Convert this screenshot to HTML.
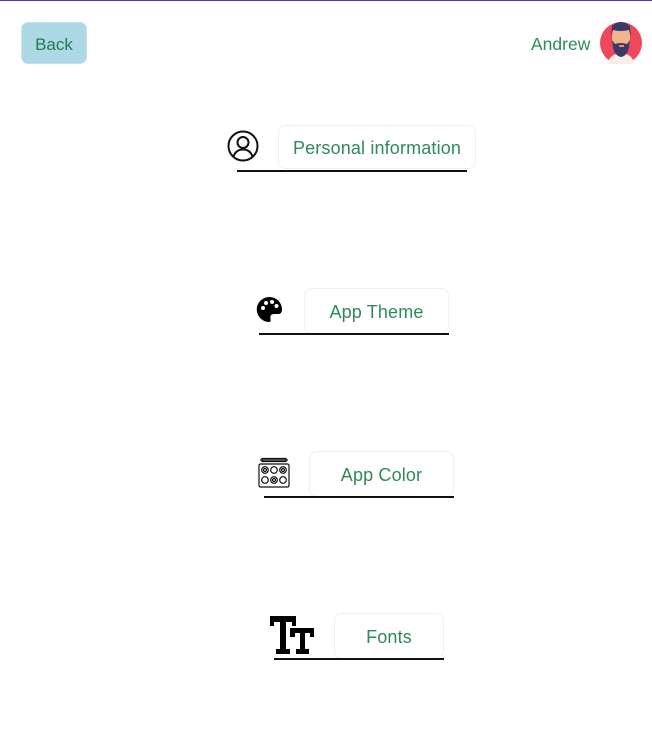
<!DOCTYPE html><html><head><style>
body{margin:0;width:652px;height:736px;background:#fff;position:relative;overflow:hidden;font-family:"Liberation Sans","DejaVu Sans",sans-serif;}
.a{position:absolute}
.btn{position:absolute;border:1px solid #f0f0f0;border-radius:8px;background:#fff;color:#2e8b57;font-size:18px;letter-spacing:0.15px;display:flex;align-items:center;justify-content:center;box-sizing:border-box;padding-top:3px}
.ln{position:absolute;height:2px;background:#111}
</style></head><body>
<div class="a" style="left:0;top:0;width:652px;height:1px;background:#5b2be0"></div>
<div class="btn" style="left:21px;top:22px;width:66px;height:42px;background:#add8e6;border-color:#cde;border-radius:7px;color:#237a4f;font-size:17px;letter-spacing:0">Back</div>
<div class="a" style="left:531px;top:34px;font-size:17.5px;color:#2e8b57">Andrew</div>
<svg class="a" style="left:600px;top:20px" width="43" height="44" viewBox="0 0 43 44">
<circle cx="21" cy="23" r="21" fill="#f0475a"/>
<path d="M8 44 Q9 34 21 33 Q33 34 34 44Z" fill="#fbeee6"/>
<rect x="12" y="8" width="18" height="20" rx="5" fill="#f2b48a"/>
<path d="M11 18 L12 6 Q21 -2 30 6 L31 18 L29 10 Q21 12 13 10Z" fill="#3a3a6a"/>
<path d="M12 20 Q13 36 21 37 Q29 36 30 20 L27 24 Q21 22 15 24Z" fill="#3a3a6a"/>
<rect x="19" y="25" width="5" height="2" fill="#e88"/>
</svg>

<svg class="a" style="left:227px;top:130px" width="32" height="32" viewBox="0 0 32 32" fill="none" stroke="#111" stroke-width="2"><circle cx="16" cy="16" r="14.5"/><circle cx="16" cy="12.5" r="5.5"/><path d="M6.5 26.5 Q9 19.5 16 19.5 Q23 19.5 25.5 26.5"/></svg>
<div class="btn" style="left:278px;top:125px;width:198px;height:44px">Personal information</div>
<div class="ln" style="left:237px;top:170px;width:230px"></div>

<svg class="a" style="left:256px;top:296px" width="27" height="27" viewBox="0 0 27 27"><path d="M13.5 1 A12.5 12.5 0 0 0 13 26 Q15 26 14.5 23 Q13.5 18 18 18 L22 18 Q26 18 26 13.5 A12.5 12.5 0 0 0 13.5 1Z" fill="#000"/><circle cx="7" cy="12" r="2" fill="#fff"/><circle cx="10" cy="7" r="2" fill="#fff"/><circle cx="16" cy="6" r="2" fill="#fff"/><circle cx="20.5" cy="10" r="2" fill="#fff"/></svg>
<div class="btn" style="left:304px;top:288px;width:145px;height:46px">App Theme</div>
<div class="ln" style="left:259px;top:333px;width:190px"></div>

<svg class="a" style="left:258px;top:457px" width="32" height="31" viewBox="0 0 32 31" fill="none" stroke="#111" stroke-width="1.2"><path d="M2 3 L30 3 M4 1.5 h24 v3 h-24z"/><rect x="1" y="7" width="30" height="23" rx="1.5"/><circle cx="7" cy="13" r="3.3"/><circle cx="16" cy="13" r="3.3"/><circle cx="25" cy="13" r="3.3"/><circle cx="7" cy="23" r="3.3"/><circle cx="16" cy="23" r="3.3"/><circle cx="25" cy="23" r="3.3"/><circle cx="7" cy="13" r="1.5"/><circle cx="25" cy="13" r="1.5"/><circle cx="16" cy="23" r="1.5"/></svg>
<div class="btn" style="left:309px;top:451px;width:145px;height:46px">App Color</div>
<div class="ln" style="left:264px;top:496px;width:190px"></div>

<svg class="a" style="left:270px;top:615px" width="46" height="40" viewBox="0 0 46 40" fill="#000"><path d="M0 1 H26 V11 H22 V7 H16 V34 H20 V39 H6 V34 H10 V7 H4 V11 H0Z"/><path d="M20 13 H44 V22 H40 V18 H35 V34 H39 V39 H26 V34 H30 V18 H25 V22 H20Z"/></svg>
<div class="btn" style="left:334px;top:613px;width:110px;height:46px">Fonts</div>
<div class="ln" style="left:274px;top:658px;width:170px"></div>
</body></html>
